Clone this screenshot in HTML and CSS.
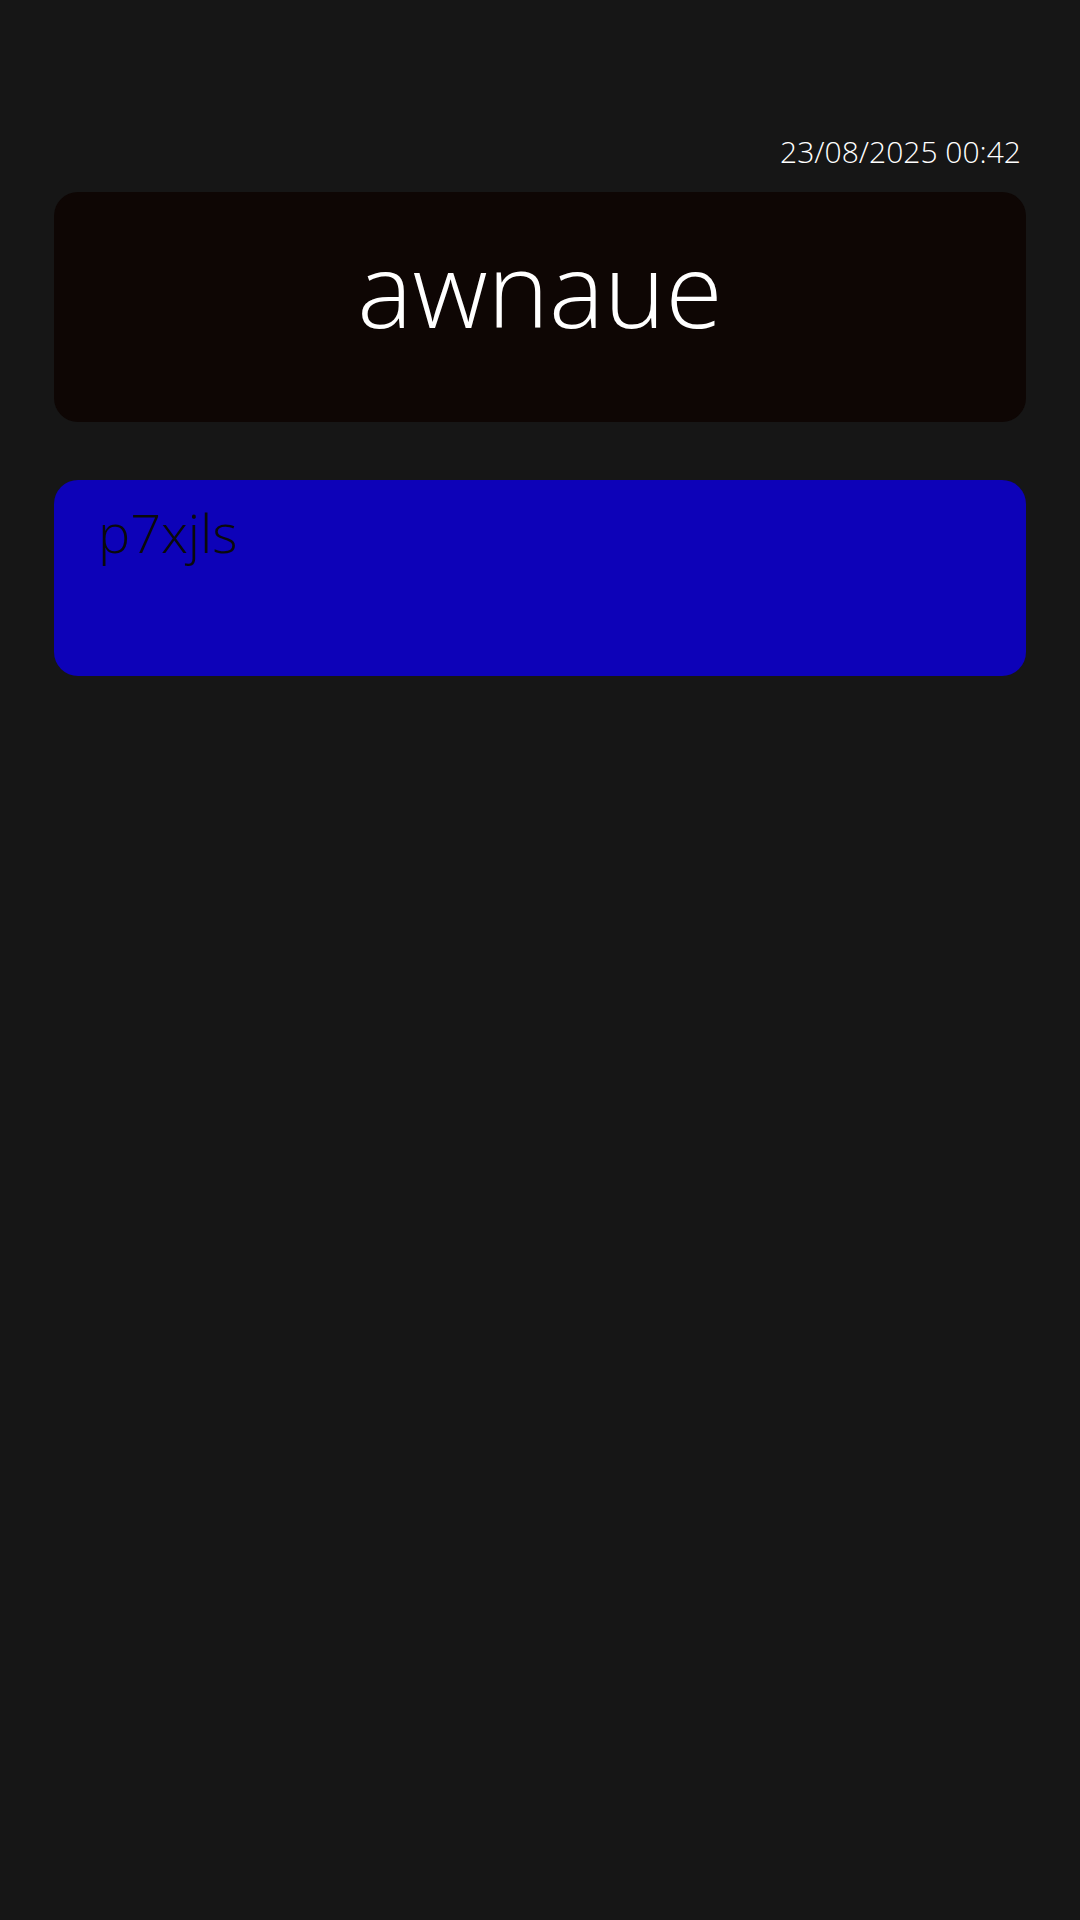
FILE: index.html
```html
<!DOCTYPE html>
<html lang="en">
<head>
<meta charset="utf-8">
<title>awnaue</title>
<link rel="stylesheet" href="styles.css">
</head>
<body>
<main class="screen">
  <div class="timestamp">23/08/2025 00:42</div>
  <section class="card card-title">
    <h1 class="title">awnaue</h1>
  </section>
  <section class="card card-note">
    <p class="note">p7xjls</p>
  </section>
</main>
</body>
</html>
```

FILE: styles.css
```css
html, body {
  margin: 0;
  padding: 0;
  background: #161616;
}

body {
  width: 1080px;
  height: 1920px;
  font-family: "Open Sans", "Noto Sans", sans-serif;
  font-weight: 300;
}

.screen {
  display: flex;
  flex-direction: column;
  padding: 130px 54px 0 54px;
}

.timestamp {
  align-self: flex-end;
  margin-right: 5px;
  color: #ffffff;
  font-size: 30px;
  line-height: 44px;
  height: 44px;
  margin-bottom: 18px;
}

.card {
  box-sizing: border-box;
  border-radius: 24px;
}

.card-title {
  height: 230px;
  background: #0e0604;
  display: flex;
  justify-content: center;
  padding-top: 26px;
}

.title {
  margin: 0;
  color: #ffffff;
  font-weight: 300;
  font-size: 104px;
  line-height: 140px;
}

.card-note {
  margin-top: 58px;
  height: 196px;
  background: #0d02b8;
  padding: 17px 44px;
}

.note {
  margin: 0;
  color: #0a0a0a;
  font-size: 54px;
  line-height: 70px;
}
```
